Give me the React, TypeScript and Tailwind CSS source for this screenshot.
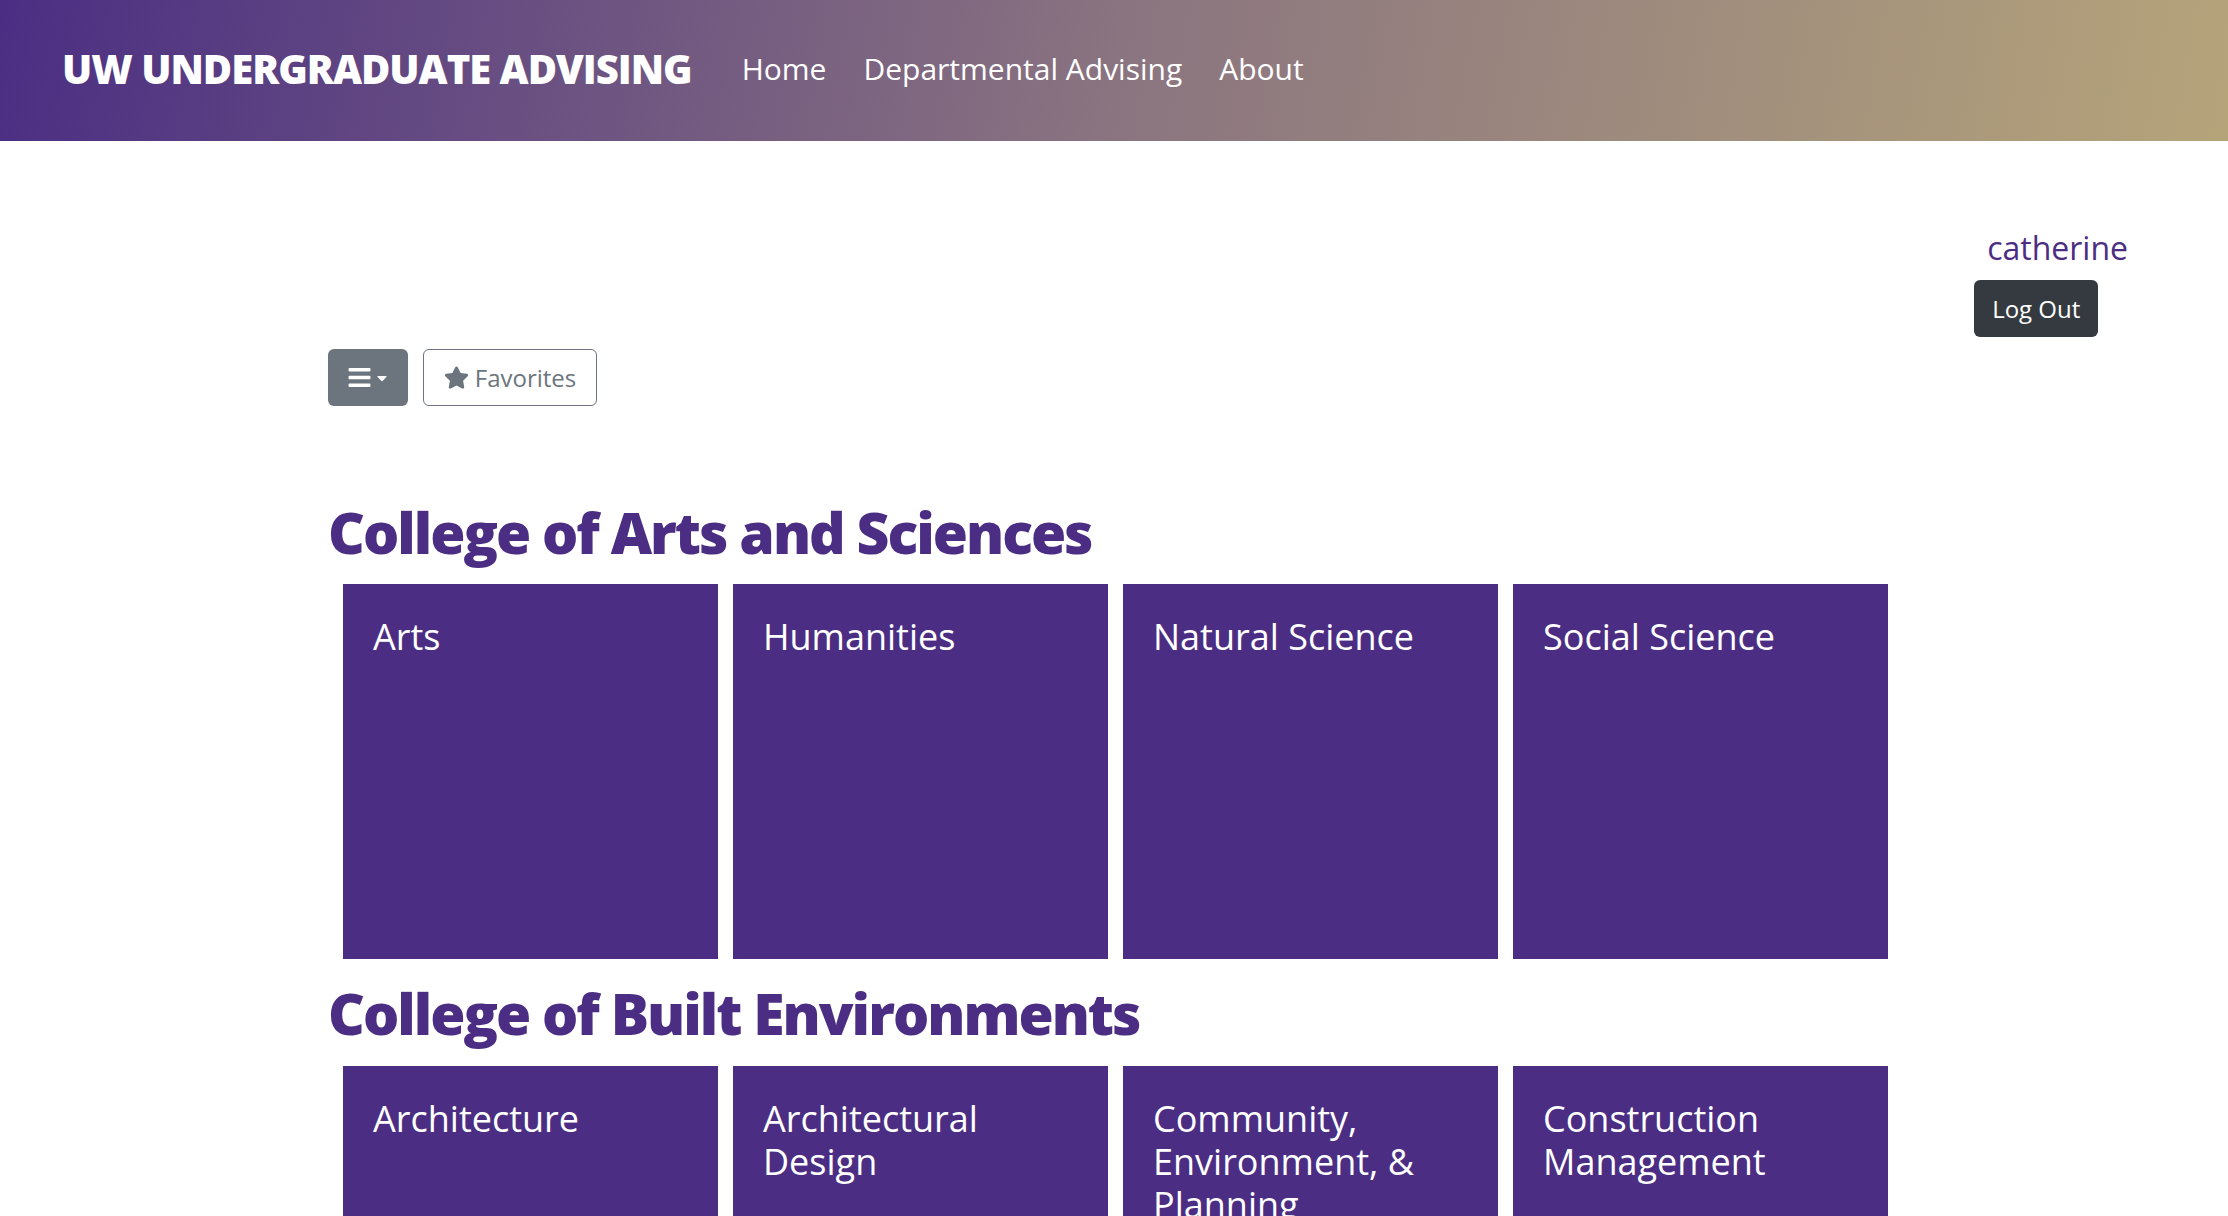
import { FaBars, FaCaretDown, FaStar } from 'react-icons/fa';

interface College {
  name: string;
  departments: string[];
}

const colleges: College[] = [
  {
    name: 'College of Arts and Sciences',
    departments: ['Arts', 'Humanities', 'Natural Science', 'Social Science'],
  },
  {
    name: 'College of Built Environments',
    departments: [
      'Architecture',
      'Architectural Design',
      'Community, Environment, & Planning',
      'Construction Management',
    ],
  },
];

const navLinks = ['Home', 'Departmental Advising', 'About'];

const App = () => {
  return (
    <div className="min-h-screen bg-white font-['Open_Sans',sans-serif]">
      <header className="h-[141px] flex items-center pl-[62px] pb-[4px] bg-[linear-gradient(100deg,#4b2e83_0%,#8a7480_50%,#b5a47a_100%)]">
        <h1 className="text-[40px] font-extrabold text-white tracking-[-0.025em] leading-none">
          UW UNDERGRADUATE ADVISING
        </h1>
        <nav className="flex items-center gap-[37px] ml-[50px]">
          {navLinks.map((link) => (
            <a key={link} href="#" className="text-[30px] text-white leading-none">
              {link}
            </a>
          ))}
        </nav>
      </header>

      <div className="flex justify-end pr-[100px] pt-[83px]">
        <div className="flex flex-col items-start">
          <span className="pl-[13px] text-[32px] leading-[48px] text-[#4b2e83]">catherine</span>
          <button className="mt-[8px] h-[57px] px-[18px] rounded-[6px] bg-[#343a40] text-white text-[24px]">
            Log Out
          </button>
        </div>
      </div>

      <div className="pl-[328px]">
        <div className="flex gap-[15px] mt-[12px]">
          <button className="w-[80px] h-[57px] rounded-[6px] bg-[#6c757d] text-white flex items-center justify-center gap-[4px]">
            <FaBars className="w-[25px] h-[25px]" />
            <FaCaretDown className="w-[16px] h-[16px] -ml-[2px]" />
          </button>
          <button className="w-[174px] h-[57px] rounded-[6px] border border-[#6c757d] text-[#6c757d] text-[24px] flex items-center justify-center gap-[6px]">
            <FaStar className="w-[25px] h-[25px]" />
            <span>Favorites</span>
          </button>
        </div>

        <div className="mt-[92px] flex flex-col gap-[20px]">
          {colleges.map((college) => (
            <section key={college.name}>
              <h2 className="text-[57px] font-extrabold leading-[1.2] tracking-[-0.035em] text-[#4b2e83] mb-[18px]">
                {college.name}
              </h2>
              <div className="flex gap-[15px] pl-[15px]">
                {college.departments.map((dept) => (
                  <div
                    key={dept}
                    className="w-[375px] h-[375px] shrink-0 bg-[#4b2e83] px-[30px] pt-[31px] text-white text-[36px] leading-[1.2]"
                  >
                    {dept}
                  </div>
                ))}
              </div>
            </section>
          ))}
        </div>
      </div>
    </div>
  );
};

export default App;
